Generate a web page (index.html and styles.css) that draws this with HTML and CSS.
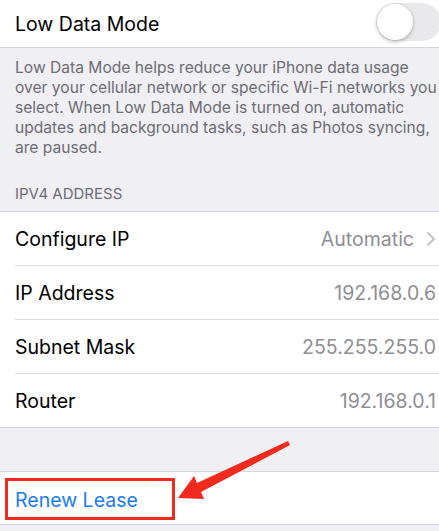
FILE: index.html
```html
<!DOCTYPE html>
<html lang="en">
<head>
   <meta charset="UTF-8">
   <meta name="viewport" content="width=device-width, initial-scale=1.0">
   <title>Wi-Fi</title>
   <link rel="stylesheet" href="styles.css">
</head>
<body>
   <div class="settings">
      <!-- Low Data Mode -->
      <div class="group top">
         <div class="row toggle-row">
            <span class="label">Low Data Mode</span>
            <div class="switch"><div class="knob"></div></div>
         </div>
      </div>
      <p class="footer">Low Data Mode helps reduce your iPhone data usage over your cellular network or specific Wi-Fi networks you select. When Low Data Mode is turned on, automatic updates and background tasks, such as Photos syncing, are paused.</p>

      <!-- IPv4 -->
      <div class="header">IPV4 ADDRESS</div>
      <div class="group">
         <div class="row">
            <span class="label">Configure IP</span>
            <span class="value">Automatic
               <svg class="chevron" width="10" height="16" viewBox="0 0 10 16"><path d="M2 2 L8 8 L2 14" stroke="#c4c4c8" stroke-width="2" fill="none" stroke-linecap="round" stroke-linejoin="round"/></svg>
            </span>
         </div>
         <div class="row">
            <span class="label">IP Address</span>
            <span class="value">192.168.0.6</span>
         </div>
         <div class="row">
            <span class="label">Subnet Mask</span>
            <span class="value">255.255.255.0</span>
         </div>
         <div class="row">
            <span class="label">Router</span>
            <span class="value">192.168.0.1</span>
         </div>
      </div>

      <div class="spacer"></div>

      <div class="group">
         <div class="row action-row">
            <span class="action">Renew Lease</span>
         </div>
      </div>
   </div>

   <!-- callout -->
   <div class="highlight"></div>
   <svg class="arrow" width="439" height="531" viewBox="0 0 439 531">
      <polygon points="178,498 194,476 197,483 288,441 290,445 201,492 204,499" fill="#f02a1c"/>
   </svg>
</body>
</html>
```

FILE: styles.css
```css
body {
   margin: 0;
   padding: 0;
   background-color: #efeff4;
   font-family: Inter, "Noto Sans", sans-serif;
   overflow: hidden;
   position: relative;
   height: 531px;
}

.settings {
   display: flex;
   flex-direction: column;
}

.group {
   background: #fff;
   border-top: 1px solid #d6d6da;
   border-bottom: 1px solid #d6d6da;
}

.group.top {
   border-top: none;
}

.row {
   height: 53px;
   margin-left: 15px;
   padding-right: 3px;
   display: flex;
   align-items: center;
   justify-content: space-between;
   border-bottom: 1px solid #dcdce0;
   font-size: 19.5px;
   color: #000;
}

.row:last-child {
   border-bottom: none;
}

.toggle-row {
   height: 47px;
   padding-right: 0;
}

.value {
   color: #8e8e93;
   display: flex;
   align-items: center;
}

.chevron {
   margin-left: 12px;
   margin-right: 0;
}

.switch {
   width: 64px;
   height: 38px;
   border-radius: 19px;
   background: #e9e9eb;
   display: flex;
   align-items: center;
   padding-left: 1px;
   margin-right: -2px;
   margin-bottom: 4px;
}

.knob {
   width: 36px;
   height: 36px;
   border-radius: 50%;
   background: #fff;
   box-shadow: 0 2px 4px rgba(0, 0, 0, 0.22), 0 0 0 1px rgba(0, 0, 0, 0.05);
}

.footer {
   margin: 0;
   padding: 10px 0 0 15px;
   font-size: 15.6px;
   line-height: 20px;
   color: #6d6d72;
}

.header {
   padding: 26px 15px 8px;
   font-size: 15px;
   color: #6d6d72;
}

.spacer {
   height: 43px;
}

.action-row {
   height: 52px;
   padding-top: 3px;
   box-sizing: border-box;
}

.action {
   color: #1a7cf0;
}

.highlight {
   position: absolute;
   left: 5px;
   top: 478px;
   width: 170px;
   height: 42px;
   box-sizing: border-box;
   border: 3px solid #f02a1c;
}

.arrow {
   position: absolute;
   left: 0;
   top: 0;
   pointer-events: none;
}
```
